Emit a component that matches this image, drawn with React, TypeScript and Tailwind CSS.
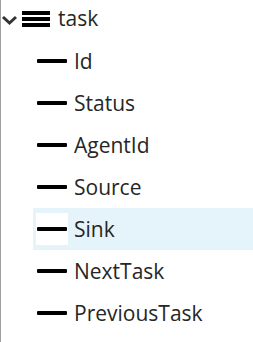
import React from "react";

const items = ["Id", "Status", "AgentId", "Source", "Sink", "NextTask", "PreviousTask"];

export default function App() {
  return (
    <div
      className="w-[253px] h-[342px] bg-white border-l border-[#a0a0a0] overflow-hidden"
      style={{ fontFamily: '"Open Sans", "Noto Sans", sans-serif' }}
    >
      <div className="flex items-center h-[40px] pb-[3px]">
        <svg width="17" height="12" viewBox="0 0 17 12" className="ml-[0px] mt-[2px]">
          <path d="M2 3 L8.5 9 L15 3" fill="none" stroke="#333" strokeWidth="3" />
        </svg>
        <div className="ml-[4px] flex flex-col gap-[2px] w-[28px]">
          <div className="h-[4px] bg-black" />
          <div className="h-[4px] bg-black" />
          <div className="h-[4px] bg-black" />
        </div>
        <span className="ml-[8px] text-[21px] leading-none text-[#262626]">task</span>
      </div>
      {items.map((it) => (
        <div
          key={it}
          className={
            "ml-[32px] h-[42px] flex items-center pl-[3px] " +
            (it === "Sink" ? "bg-[#e5f3fb]" : "")
          }
        >
          <div className="w-[32px] h-[32px] bg-white flex items-center justify-center">
            <div className="w-[30px] h-[4px] bg-black rounded-[1px]" />
          </div>
          <span className="ml-[6px] text-[21px] leading-none text-[#262626]">{it}</span>
        </div>
      ))}
    </div>
  );
}
